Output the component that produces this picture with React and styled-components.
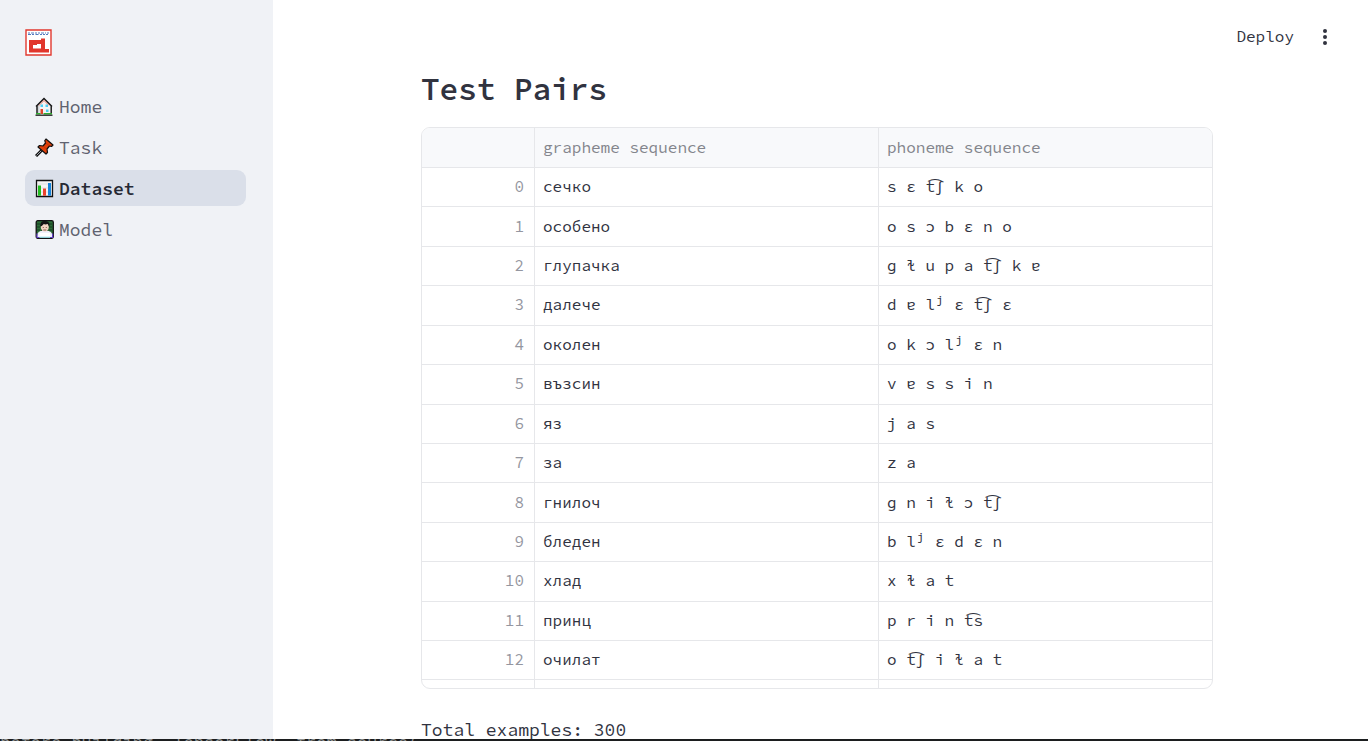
import React from "react";
import styled, { createGlobalStyle } from "styled-components";

const GlobalStyle = createGlobalStyle`
  *, *::before, *::after { box-sizing: border-box; }
  body {
    margin: 0;
    background: #ffffff;
    color: #31333f;
    font-family: "Source Code Pro", "Liberation Mono", "DejaVu Sans Mono", monospace;
    font-size: 18px;
  }
`;

const Screen = styled.div`
  height: 100vh;
  display: flex;
  flex-direction: column;
  overflow: hidden;
`;

const Layout = styled.div`
  flex: 1;
  min-height: 0;
  display: flex;
`;

const Sidebar = styled.aside`
  flex: none;
  width: 273px;
  background: #f0f2f6;
  padding: 29px 27px 0 25px;
`;

const Logo = styled.svg`
  display: block;
  width: 27px;
  height: 27px;
`;

const Nav = styled.nav`
  display: flex;
  flex-direction: column;
  gap: 5px;
  margin-top: 32px;
`;

const NavLink = styled.a`
  display: flex;
  align-items: center;
  gap: 5px;
  height: 36px;
  padding: 0 10px;
  border-radius: 9px;
  text-decoration: none;
  color: ${(p) => (p.$active ? "#262934" : "#5f626f")};
  background: ${(p) => (p.$active ? "#dadfe9" : "transparent")};
  font-weight: ${(p) => (p.$active ? 600 : 400)};
`;

const Emoji = styled.svg`
  flex: none;
  width: 19px;
  height: 19px;
`;

const Main = styled.div`
  flex: 1;
  min-width: 0;
  padding-right: 7px;
  overflow: hidden;
`;

const Toolbar = styled.header`
  display: flex;
  justify-content: flex-end;
  align-items: center;
  gap: 19px;
  height: 74px;
  padding-right: 24px;
`;

const ToolButton = styled.button`
  display: flex;
  align-items: center;
  justify-content: center;
  border: 0;
  padding: 0;
  min-width: 24px;
  height: 32px;
  background: none;
  color: inherit;
  font: inherit;
  font-size: 16px;
`;

const DeployButton = styled(ToolButton)`
  padding-bottom: 2px;
`;

const Content = styled.main`
  max-width: 792px;
  margin: 0 auto;
`;

const Title = styled.h1`
  margin: 0;
  height: 53px;
  line-height: 30px;
  font-size: 31px;
  font-weight: 600;
`;

const Frame = styled.div`
  height: 562px;
  overflow: hidden;
  border: 1px solid #e6e7ea;
  border-radius: 9px;
`;

const Table = styled.table`
  width: 100%;
  height: 592px;
  table-layout: fixed;
  border-collapse: separate;
  border-spacing: 0;
  font-size: 16px;
  line-height: 20px;
`;

const IndexCol = styled.col`
  width: 113px;
`;

const WordCol = styled.col`
  width: 344px;
`;

const HeadCell = styled.th`
  height: 40px;
  padding: 0 8px 2px;
  background: #f8f9fb;
  color: #83858c;
  text-align: left;
  font-weight: 400;
  border-bottom: 1px solid #e6e7ea;
  border-right: 1px solid #e6e7ea;
  &:last-child { border-right: 0; }
`;

const Cell = styled.td`
  height: 39px;
  padding: 0 8px 2px;
  text-align: left;
  white-space: pre;
  border-bottom: 1px solid #e6e7ea;
  border-right: 1px solid #e6e7ea;
  &:last-child { border-right: 0; }
`;

const IndexCell = styled(Cell)`
  padding-right: 10px;
  text-align: right;
  color: #9496a0;
`;

const Total = styled.p`
  margin: 27px 0 0;
  line-height: 28px;
`;

const Strip = styled.footer`
  flex: none;
  height: 2px;
  overflow: hidden;
  background: #1c1e1f;
  color: #8d9090;
  font-size: 17px;
  line-height: 6px;
  white-space: pre;
`;

const rows = [
  ["сечко", "s ɛ t͡ʃ k o"],
  ["особено", "o s ɔ b ɛ n o"],
  ["глупачка", "ɡ ɫ u p a t͡ʃ k ɐ"],
  ["далече", "d ɐ lʲ ɛ t͡ʃ ɛ"],
  ["околен", "o k ɔ lʲ ɛ n"],
  ["възсин", "v ɐ s s i n"],
  ["яз", "j a s"],
  ["за", "z a"],
  ["гнилоч", "ɡ n i ɫ ɔ t͡ʃ"],
  ["бледен", "b lʲ ɛ d ɛ n"],
  ["хлад", "x ɫ a t"],
  ["принц", "p r i n t͡s"],
  ["очилат", "o t͡ʃ i ɫ a t"],
];

const HouseIcon = () => (
  <Emoji viewBox="0 0 19 19" aria-hidden="true">
    <path d="M2 17V8l7-6 7 6v9z" fill="#f4f4f4" />
    <path d="M2.500 17V8l2-2v11z" fill="#cfd3d8" />
    <path d="M1 9.500 9 1.500l8 8M2 8.500V17M16.200 8.500V17" fill="none" stroke="#111" strokeWidth="1.400" />
    <path d="M4 8.500 9 3.500l5 5" fill="none" stroke="#e2533c" strokeWidth=".8" />
    <path d="M5.500 7.500H8V10H5.500zM10.500 7.500H13V10h-2.500zM11 12.500h2.500V15H11z" fill="#4fcdf2" />
    <path d="M5.500 12H8v5H5.500z" fill="#e0452b" />
    <path d="M1 16.800h4.500M8.500 16.800h8.500" stroke="#2fae2f" strokeWidth="1.600" />
    <path d="M.5 18.200h17" stroke="#111" strokeWidth="1.200" />
  </Emoji>
);

const PinIcon = () => (
  <Emoji viewBox="0 0 19 19" aria-hidden="true">
    <path d="m1 18 7-7" stroke="#111" strokeWidth="3" />
    <path d="m1.500 17.500 6.500-6.500" stroke="#a3a8ad" strokeWidth="1" />
    <path d="m11 1 7 6-1.500 1.500-2-.5-2.500 3 .5 3.500-1.500 1.500-8-7L4.500 7.500l3.500.5 2.500-3-.7-2.500z" fill="#e1410b" stroke="#111" strokeWidth="1.200" strokeLinejoin="round" />
    <path d="m8 8 4 3.500M10.500 4.500 15 8.300" stroke="#b52d04" strokeWidth=".6" />
  </Emoji>
);

const ChartIcon = () => (
  <Emoji viewBox="0 0 19 19" aria-hidden="true">
    <path d="M1.500 1.500h16v16h-16z" fill="#f4f4f4" stroke="#111" strokeWidth="1.300" />
    <path d="M3 5h13M3 9h13M3 13h13" stroke="#d4d7da" strokeWidth=".7" />
    <path d="M3 6.500h3v10.200H3z" fill="#22bd20" />
    <path d="M8 9.500h3v7.200H8z" fill="#ea432c" />
    <path d="M13 4h3v12.700h-3z" fill="#1684da" />
  </Emoji>
);

const PersonIcon = () => (
  <Emoji viewBox="0 0 19 19" aria-hidden="true">
    <rect x="1.200" y=".7" width="17.100" height="17.600" rx="1.500" fill="#2d6d38" stroke="#111" strokeWidth="1.300" />
    <path d="M2 4h15M2 7h15M2 10h15" stroke="#173e20" strokeWidth="1" strokeDasharray="3 1" />
    <path d="M2 17c0-4 2-6 4.500-6h6.500c2.500 0 4.500 2 4.500 6z" fill="#eff0fa" />
    <path d="M2 13.500v4h2.500M17.600 13.500v4H15" fill="none" stroke="#633ec4" strokeWidth="1.200" />
    <ellipse cx="9.800" cy="7" rx="4" ry="4.500" fill="#f4d4c3" />
    <path d="M5.300 6.500C4.800 3 6.300 1 9.800 1s5.500 2 4.500 6l-1.500-3-2.500.5L8.800 4l-2 2z" fill="#151515" />
    <path d="M8.300 7v1M11.300 7v1M8.300 10h3" stroke="#6b3e31" strokeWidth=".8" />
    <path d="M4.500 13h10.500v4.500H4.500z" fill="#fff" />
    <path d="M4.500 17.200H15" stroke="#8fdcee" strokeWidth="1" />
  </Emoji>
);

const links = [
  ["Home", HouseIcon],
  ["Task", PinIcon],
  ["Dataset", ChartIcon],
  ["Model", PersonIcon],
];

export default function App() {
  return (
    <Screen>
      <GlobalStyle />
      <Layout>
        <Sidebar>
          <Logo viewBox="0 0 27 27" role="img" aria-label="Logo">
            <path d="M1 1h25v25H1z" fill="#fff" stroke="#e1392f" strokeWidth="1.400" />
            <path d="M3 4h2M6 4h3M10 4h2M13 4h2M16 4h3M20 4h1M22 4h2M3 5.500h3M7 5.500h2M10.500 5.500h3M15 5.500h2M18 5.500h2M21 5.500h2" stroke="#5279bd" strokeWidth="1" />
            <path d="M4 11h12V9.500h4V20h4v3.500H4zm4 5v3.500h8V15h-4v1z" fill="#e1362c" fillRule="evenodd" />
          </Logo>
          <Nav>
            {links.map(([label, Icon]) => (
              <NavLink key={label} href="#" $active={label === "Dataset"}>
                <Icon />
                {label}
              </NavLink>
            ))}
          </Nav>
        </Sidebar>
        <Main>
          <Toolbar>
            <DeployButton type="button">Deploy</DeployButton>
            <ToolButton type="button" aria-label="Menu">
              <svg width="24" height="18" viewBox="0 0 24 18" fill="#31333f">
                <circle cx="12" cy="3" r="2" />
                <circle cx="12" cy="9" r="2" />
                <circle cx="12" cy="15" r="2" />
              </svg>
            </ToolButton>
          </Toolbar>
          <Content>
            <Title>Test Pairs</Title>
            <Frame>
              <Table>
                <colgroup>
                  <IndexCol />
                  <WordCol />
                  <col />
                </colgroup>
                <thead>
                  <tr>
                    <HeadCell />
                    <HeadCell>grapheme sequence</HeadCell>
                    <HeadCell>phoneme sequence</HeadCell>
                  </tr>
                </thead>
                <tbody>
                  {rows.map(([word, sounds], i) => (
                    <tr key={word}>
                      <IndexCell>{i}</IndexCell>
                      <Cell>{word}</Cell>
                      <Cell>{sounds}</Cell>
                    </tr>
                  ))}
                  <tr>
                    <IndexCell />
                    <Cell />
                    <Cell />
                  </tr>
                </tbody>
              </Table>
            </Frame>
            <Total>Total examples: 300</Total>
          </Content>
        </Main>
      </Layout>
      <Strip>{"before building  TensorFlow  from source("}</Strip>
    </Screen>
  );
}
